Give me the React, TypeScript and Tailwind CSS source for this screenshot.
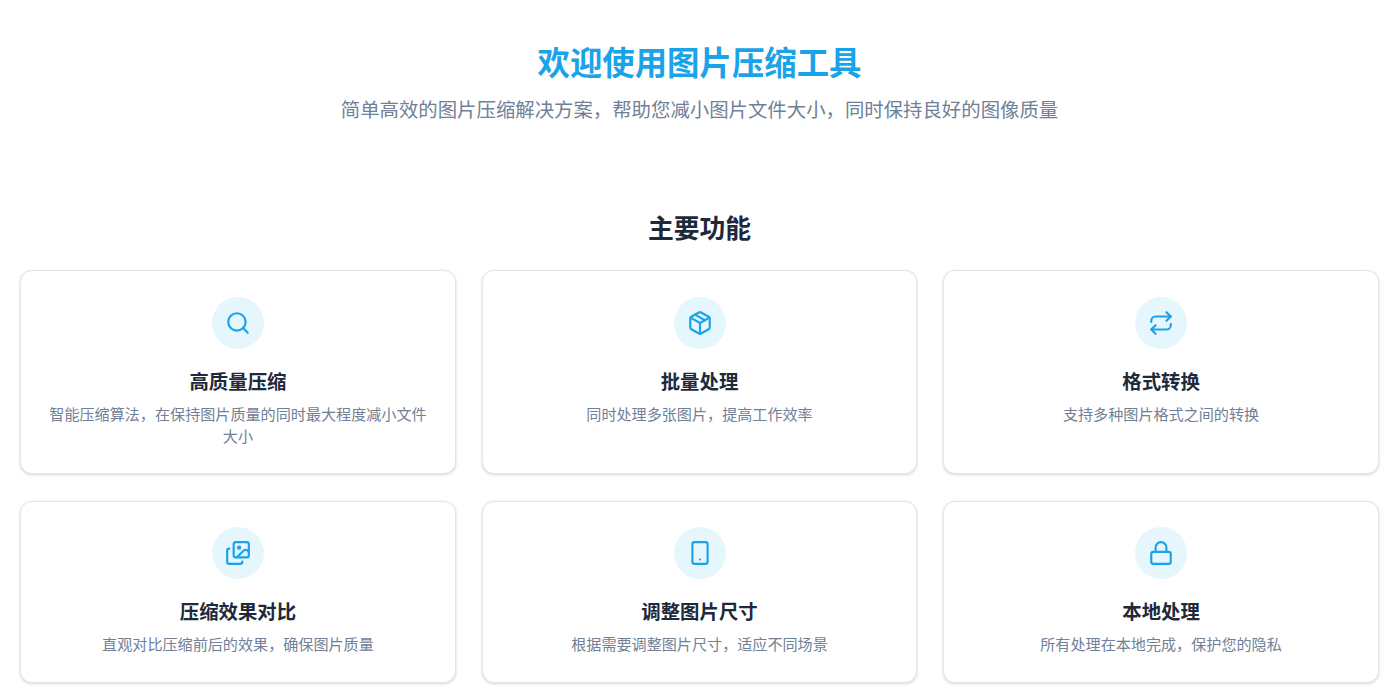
import { Search, Package, Repeat, Images, Smartphone, Lock } from 'lucide-react';
import type { LucideIcon } from 'lucide-react';

type Feature = { icon: LucideIcon; title: string; desc: string };

const features: Feature[] = [
  { icon: Search, title: '高质量压缩', desc: '智能压缩算法，在保持图片质量的同时最大程度减小文件大小' },
  { icon: Package, title: '批量处理', desc: '同时处理多张图片，提高工作效率' },
  { icon: Repeat, title: '格式转换', desc: '支持多种图片格式之间的转换' },
  { icon: Images, title: '压缩效果对比', desc: '直观对比压缩前后的效果，确保图片质量' },
  { icon: Smartphone, title: '调整图片尺寸', desc: '根据需要调整图片尺寸，适应不同场景' },
  { icon: Lock, title: '本地处理', desc: '所有处理在本地完成，保护您的隐私' },
];

function FeatureCard({ feature }: { feature: Feature }) {
  const Icon = feature.icon;
  return (
    <div className="flex flex-col items-center rounded-xl border border-[#dfe5ec] bg-white px-[25.6px] pt-[25.6px] pb-[27.6px] text-center shadow-[0_1px_3px_rgba(0,0,0,0.16)]">
      <div className="mb-[17px] flex h-[52px] w-[52px] items-center justify-center rounded-full bg-[#e6f6fd] text-[#1aa3e8]">
        <Icon size={26} strokeWidth={2} />
      </div>
      <h3 className="mb-[7px] text-[19.4px] leading-[29px] font-semibold text-[#1e293b]">{feature.title}</h3>
      <p className="text-[15.1px] leading-[22px] text-[#718096]">{feature.desc}</p>
    </div>
  );
}

export default function App() {
  return (
    <div className="h-[696px] overflow-hidden bg-white px-5 font-['Noto_Sans_CJK_SC','Noto_Sans',sans-serif]">
      <div className="pt-[37px] pb-[85px] text-center">
        <h1 className="mb-[9px] text-[32.4px] leading-[48px] font-bold text-[#1aa3e8]">欢迎使用图片压缩工具</h1>
        <p className="text-[19.4px] leading-[29px] text-[#718096]">
          简单高效的图片压缩解决方案，帮助您减小图片文件大小，同时保持良好的图像质量
        </p>
      </div>
      <h2 className="mb-6 text-center text-[25.8px] leading-[38px] font-bold text-[#1e293b]">主要功能</h2>
      <div className="grid grid-cols-3 gap-x-[25.6px] gap-y-[26.6px]">
        {features.map((f) => (
          <FeatureCard key={f.title} feature={f} />
        ))}
      </div>
    </div>
  );
}
